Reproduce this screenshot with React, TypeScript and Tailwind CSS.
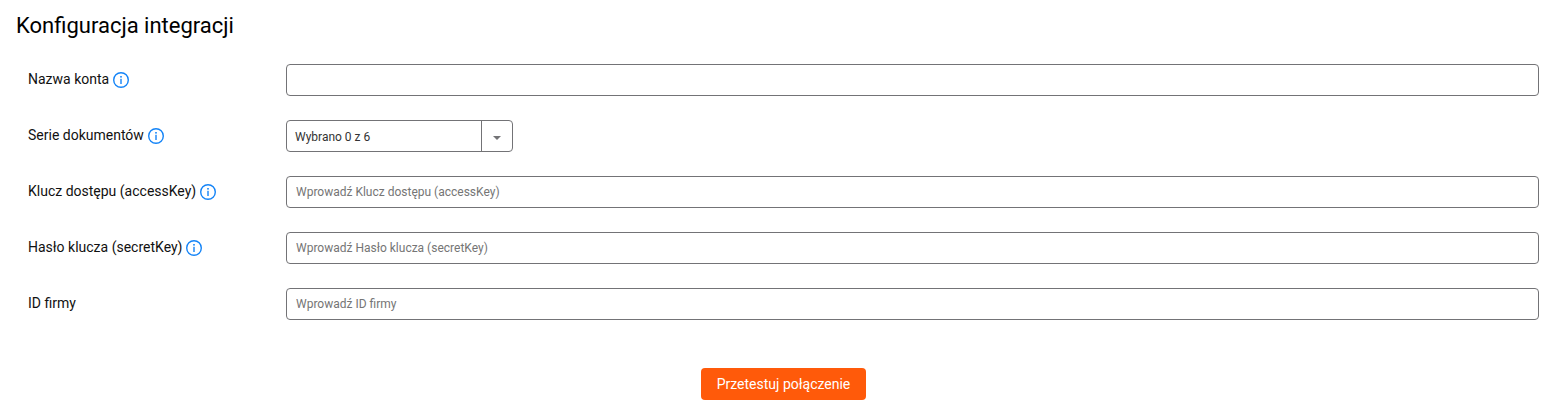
import React, { useState } from 'react';

interface Field {
  id: string;
  label: string;
  hasInfo?: boolean;
  type: 'text' | 'select';
  placeholder?: string;
}

const fields: Field[] = [
  { id: 'accountName', label: 'Nazwa konta', hasInfo: true, type: 'text' },
  { id: 'series', label: 'Serie dokumentów', hasInfo: true, type: 'select' },
  { id: 'accessKey', label: 'Klucz dostępu (accessKey)', hasInfo: true, type: 'text', placeholder: 'Wprowadź Klucz dostępu (accessKey)' },
  { id: 'secretKey', label: 'Hasło klucza (secretKey)', hasInfo: true, type: 'text', placeholder: 'Wprowadź Hasło klucza (secretKey)' },
  { id: 'companyId', label: 'ID firmy', type: 'text', placeholder: 'Wprowadź ID firmy' },
];

const InfoIcon: React.FC = () => (
  <svg width="16" height="16" viewBox="0 0 16 16" fill="none" className="ml-1 shrink-0">
    <circle cx="8" cy="8" r="7.3" stroke="#1484f7" strokeWidth="1.4" />
    <rect x="7.3" y="6.8" width="1.4" height="5.2" fill="#1484f7" />
    <rect x="7.2" y="4" width="1.6" height="1.6" fill="#1484f7" />
  </svg>
);

const SeriesSelect: React.FC<{ id: string }> = ({ id }) => (
  <button id={id} type="button" className="flex h-8 w-[227px] rounded border border-[#737376] bg-white text-left text-xs text-[#333]">
    <span className="flex h-full flex-1 items-center pl-2 pt-px">Wybrano 0 z 6</span>
    <span className="flex h-full w-[31px] items-center justify-center border-l border-[#737376]">
      <svg width="8" height="4" viewBox="0 0 8 4" className="mt-1">
        <path d="M0 0h8L4 4z" fill="#737376" />
      </svg>
    </span>
  </button>
);

const App: React.FC = () => {
  const [values, setValues] = useState<Record<string, string>>({});

  return (
    <div className="min-h-[418px] bg-white pt-3 font-['Roboto',sans-serif] text-black">
      <h1 className="pl-4 text-[22px] leading-7">Konfiguracja integracji</h1>

      <form className="mt-6 pl-7 pr-[29px]" onSubmit={e => e.preventDefault()}>
        <div className="space-y-6">
          {fields.map(field => (
            <div key={field.id} className="flex h-8">
              <label htmlFor={field.id} className="flex h-8 w-[258px] shrink-0 items-center text-sm text-[#111]">
                <span className="-mt-0.5">{field.label}</span>
                {field.hasInfo && <InfoIcon />}
              </label>
              {field.type === 'select' ? (
                <SeriesSelect id={field.id} />
              ) : (
                <input
                  id={field.id}
                  value={values[field.id] || ''}
                  placeholder={field.placeholder}
                  onChange={e => setValues({ ...values, [field.id]: e.target.value })}
                  className="h-8 min-w-0 flex-1 rounded border border-[#737376] px-[9px] text-xs placeholder:text-[#757575]"
                />
              )}
            </div>
          ))}
        </div>

        <div className="mt-12 flex justify-center">
          <button type="submit" className="h-8 w-[165px] rounded bg-[#ff5a0a] text-sm text-white">
            Przetestuj połączenie
          </button>
        </div>
      </form>
    </div>
  );
};

export default App;
